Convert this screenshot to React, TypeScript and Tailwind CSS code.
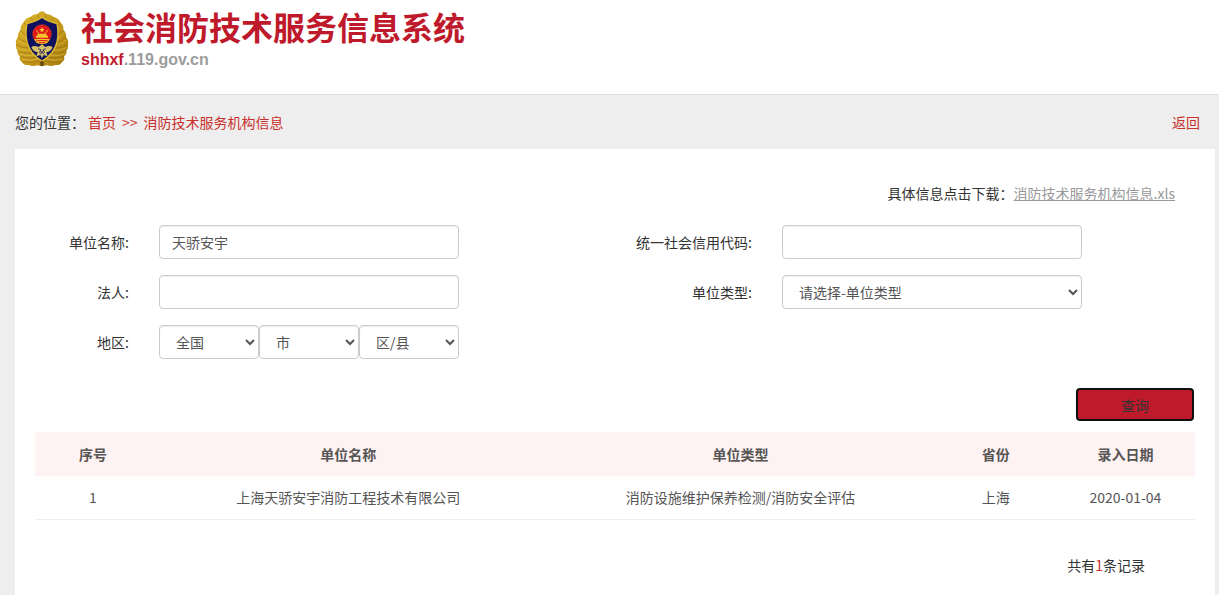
import { useState, type ReactNode } from "react";
import clsx from "clsx";

const controlClass =
  "h-[34px] rounded border border-[#cccccc] bg-white px-3 text-sm text-[#555555] shadow-[inset_0_1px_1px_rgba(0,0,0,0.075)]";

const records = [
  {
    id: 1,
    name: "上海天骄安宇消防工程技术有限公司",
    type: "消防设施维护保养检测/消防安全评估",
    province: "上海",
    date: "2020-01-04",
  },
];

const Emblem = () => (
  <svg viewBox="21 16 162 168" className="mt-[3px] h-14 w-[54px] shrink-0" aria-hidden="true">
    <defs>
      <linearGradient id="gold" x1="0" y1="0" x2="1" y2="1">
        <stop offset="0" stopColor="#dcb62a" />
        <stop offset="0.5" stopColor="#c79b1c" />
        <stop offset="1" stopColor="#a87c10" />
      </linearGradient>
    </defs>
    <path
      d="M102 17 Q110 18 115 25 Q128 25 137 34 Q151 37 157 50 Q168 60 166 72 Q176 82 174 94 Q183 104 180 116 Q182 128 175 136 Q177 146 168 152 Q172 164 162 169 Q157 180 143 178 Q130 183 117 179 Q102 184 87 179 Q74 183 61 178 Q47 180 42 169 Q32 164 36 152 Q27 146 29 136 Q22 128 24 116 Q21 104 30 94 Q28 82 38 72 Q36 60 47 50 Q53 37 67 34 Q76 25 89 25 Q94 18 102 17Z"
      fill="url(#gold)"
    />
    <g fill="none" stroke="#8a6510" strokeWidth="2" strokeLinecap="round" opacity="0.7">
      <path d="M38 74 Q45 84 54 90 M30 95 Q40 106 56 110 M25 117 Q40 127 61 127 M30 137 Q48 145 70 142 M37 153 Q58 160 84 156 M45 169 Q70 173 94 166" />
      <path d="M166 74 Q159 84 150 90 M174 95 Q164 106 148 110 M179 117 Q164 127 143 127 M174 137 Q156 145 134 142 M167 153 Q146 160 120 156 M159 169 Q134 173 110 166" />
      <path d="M48 52 L56 60 M68 36 L74 44 M89 27 L92 36 M115 27 L112 36 M136 36 L130 44 M156 52 L148 60" />
    </g>
    <g fill="none" stroke="#ecd054" strokeWidth="2" strokeLinecap="round" opacity="0.7">
      <path d="M38 82 Q42 91 52 97 M30 104 Q39 114 55 117 M29 126 Q42 135 63 134 M34 145 Q52 152 76 149 M43 161 Q64 167 88 161" />
      <path d="M166 82 Q162 91 152 97 M174 104 Q165 114 149 117 M175 126 Q162 135 141 134 M170 145 Q152 152 128 149 M161 161 Q140 167 116 161" />
    </g>
    <path
      d="M102 35 Q119 48 147 54 Q153 83 147 109 Q138 146 102 166 Q66 146 57 109 Q51 83 57 54 Q85 48 102 35Z"
      fill="#10115e"
      stroke="#dfbd35"
      strokeWidth="4"
    />
    <path
      d="M70 124 Q79 118 92 124 L102 116 L112 124 Q125 118 134 124 Q129 139 115 140 L119 152 L107 148 L102 157 L97 148 L85 152 L89 140 Q75 139 70 124Z"
      fill="#d5c06a"
    />
    <path d="M91 129 L99 133 L94 141 M113 129 L105 133 L110 141 M97 146 L102 137 L107 146" fill="none" stroke="#29245c" strokeWidth="3" />
    <circle cx="102" cy="85" r="28" fill="#e0181b" stroke="#c43a20" strokeWidth="2" />
    <path d="M102 64 L104 70 H110 L105 74 L107 80 L102 76 L97 80 L99 74 L94 70 H100Z" fill="#ffdc3c" />
    <g fill="#f4c62d">
      <circle cx="87" cy="76" r="2.5" />
      <circle cx="91" cy="82" r="2.5" />
      <circle cx="117" cy="76" r="2.5" />
      <circle cx="113" cy="82" r="2.5" />
      <path d="M88 87 L92 84 H112 L116 87 V90 H120 V96 H84 V90 H88Z" />
      <path d="M78 101 Q102 97 126 101 L118 112 Q102 119 86 112Z" />
    </g>
    <path d="M84 106 Q102 102 120 106 M93 111 H111" fill="none" stroke="#d9171b" strokeWidth="3" />
    <path d="M96 170 L102 165 L108 170 L106 181 H98Z" fill="#654909" />
  </svg>
);

interface FieldProps {
  id: string;
  label: string;
  wide?: boolean;
  children: ReactNode;
}

const Field = ({ id, label, wide, children }: FieldProps) => (
  <div className="flex items-center gap-[30px]">
    <label
      htmlFor={id}
      className={clsx("shrink-0 text-right whitespace-nowrap", wide ? "w-[161px]" : "w-[114px]")}
    >
      {label}:
    </label>
    <div className="flex w-[300px]">{children}</div>
  </div>
);

export default function App() {
  const [name, setName] = useState("天骄安宇");

  return (
    <div className="flex min-h-screen flex-col bg-[#eeeeee] font-['Noto_Sans_CJK_SC',sans-serif] text-sm text-[#333333]">
      <header className="flex h-[95px] gap-3 border-b border-[#dddddd] bg-white pt-2 pl-[15px]">
        <Emblem />
        <div>
          <h1 className="text-[32px] leading-9 font-bold text-[#be1a2b]">社会消防技术服务信息系统</h1>
          <p className="mt-1 font-['Liberation_Sans',sans-serif] text-base leading-6 font-bold text-[#9c9c9c]">
            <span className="text-[#be1a2b]">shhxf</span>.119.gov.cn
          </p>
        </div>
      </header>

      <nav className="flex h-[54px] items-center justify-between pr-[19px] pl-[15px]">
        <div className="flex">
          <span>您的位置：</span>
          <div className="flex gap-[6px] pl-[3px] text-[#c9302c]">
            <a href="#">首页</a>
            <span>&gt;&gt;</span>
            <a href="#">消防技术服务机构信息</a>
          </div>
        </div>
        <a href="#" className="text-[#c9302c]">返回</a>
      </nav>

      <main className="mr-1 ml-[15px] grow bg-white pt-[34px]">
        <p className="pr-10 text-right leading-5">
          具体信息点击下载：
          <a href="#" className="text-[#999999] underline">消防技术服务机构信息.xls</a>
        </p>

        <form onSubmit={(e) => e.preventDefault()}>
          <div className="mt-[22px] grid grid-cols-[48%_52%] gap-y-4">
            <Field id="name" label="单位名称">
              <input
                id="name"
                value={name}
                onChange={(e) => setName(e.target.value)}
                className={clsx(controlClass, "w-full")}
              />
            </Field>
            <Field id="code" label="统一社会信用代码" wide>
              <input id="code" className={clsx(controlClass, "w-full")} />
            </Field>
            <Field id="legal" label="法人">
              <input id="legal" className={clsx(controlClass, "w-full")} />
            </Field>
            <Field id="type" label="单位类型" wide>
              <select id="type" className={clsx(controlClass, "w-full")}>
                <option>请选择-单位类型</option>
              </select>
            </Field>
            <Field id="province" label="地区">
              <select id="province" className={clsx(controlClass, "w-1/3")}>
                <option>全国</option>
              </select>
              <select aria-label="市" className={clsx(controlClass, "w-1/3")}>
                <option>市</option>
              </select>
              <select aria-label="区/县" className={clsx(controlClass, "w-1/3")}>
                <option>区/县</option>
              </select>
            </Field>
          </div>
          <div className="mt-[29px] flex justify-end pr-[21px]">
            <button
              type="submit"
              className="h-[33px] w-[118px] rounded border-2 border-[#101010] bg-[#be1a2b] text-[#333333]"
            >
              查询
            </button>
          </div>
        </form>

        <div className="mt-[11px] px-5">
          <table className="w-full table-fixed text-center text-[#555555]">
            <thead className="bg-[#fff2f2]">
              <tr className="h-11">
                <th className="w-[10%]">序号</th>
                <th className="w-[34%]">单位名称</th>
                <th>单位类型</th>
                <th className="w-[120px]">省份</th>
                <th className="w-[12%]">录入日期</th>
              </tr>
            </thead>
            <tbody>
              {records.map((record) => (
                <tr key={record.id} className="h-[43px] border-b border-[#eeeeee]">
                  <td>{record.id}</td>
                  <td>{record.name}</td>
                  <td>{record.type}</td>
                  <td>{record.province}</td>
                  <td>{record.date}</td>
                </tr>
              ))}
            </tbody>
          </table>
        </div>

        <p className="mt-[35px] pr-[70px] text-right leading-5">
          共有<span className="text-[#c9302c]">{records.length}</span>条记录
        </p>
      </main>
    </div>
  );
}
